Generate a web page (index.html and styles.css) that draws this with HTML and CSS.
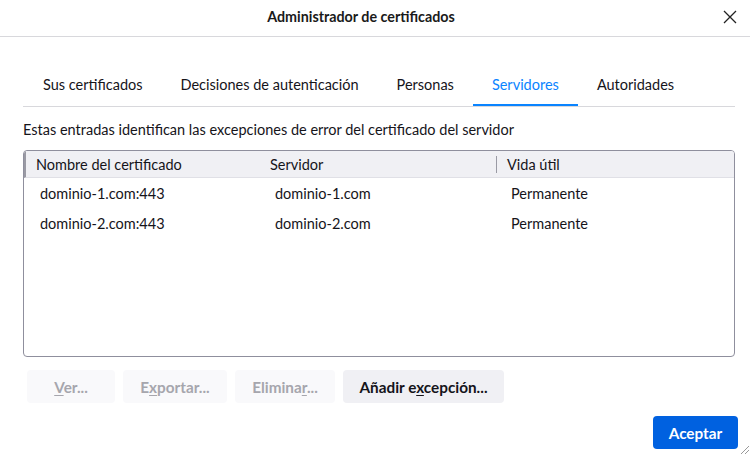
FILE: index.html
```html
<!DOCTYPE html>
<html lang="es">
<head>
<meta charset="utf-8">
<link rel="stylesheet" href="styles.css">
</head>
<body>
<div class="dialog">
  <header class="titlebar">
    <div class="title">Administrador de certificados</div>
    <button class="close" aria-label="Cerrar">
      <svg width="14" height="14" viewBox="0 0 14 14"><path d="M1 1L13 13M13 1L1 13" stroke="#222" stroke-width="1.3" fill="none"/></svg>
    </button>
  </header>
  <main class="content">
    <nav class="tabs">
      <div class="tab">Sus certificados</div>
      <div class="tab">Decisiones de autenticación</div>
      <div class="tab">Personas</div>
      <div class="tab selected">Servidores</div>
      <div class="tab">Autoridades</div>
    </nav>
    <p class="desc">Estas entradas identifican las excepciones de error del certificado del servidor</p>
    <div class="table">
      <div class="thead">
        <div class="th c1">Nombre del certificado</div>
        <div class="th c2">Servidor</div>
        <div class="th c3 sep">Vida útil</div>
      </div>
      <div class="row">
        <div class="td c1">dominio-1.com:443</div>
        <div class="td c2">dominio-1.com</div>
        <div class="td c3">Permanente</div>
      </div>
      <div class="row">
        <div class="td c1">dominio-2.com:443</div>
        <div class="td c2">dominio-2.com</div>
        <div class="td c3">Permanente</div>
      </div>
    </div>
    <div class="actions">
      <button class="btn disabled b-ver"><u>V</u>er...</button>
      <button class="btn disabled b-exp">E<u>x</u>portar...</button>
      <button class="btn disabled b-eli">Elimina<u>r</u>...</button>
      <button class="btn b-add">Añadir e<u>x</u>cepción...</button>
    </div>
    <div class="footer">
      <button class="btn primary">Aceptar</button>
    </div>
  </main>
  <div class="grip"></div>
</div>
</body>
</html>
```
FILE: styles.css
```css
* { box-sizing: border-box; }
html, body { margin: 0; padding: 0; background: #fff; }
body {
  font-family: "Lato", "Noto Sans", sans-serif;
  font-size: 14.5px;
  color: #15141a;
  width: 750px;
  height: 455px;
  overflow: hidden;
}
.dialog { position: relative; width: 750px; height: 455px; }
.titlebar {
  height: 37px;
  border-bottom: 1px solid #d8d8dc;
  display: flex;
  align-items: center;
  justify-content: center;
  padding-right: 28px;
  padding-bottom: 4px;
  position: relative;
}
.title { font-weight: 700; font-size: 14.3px; color: #1a1a1a; }
.close {
  position: absolute;
  right: 13px;
  top: 10px;
  background: none;
  border: 0;
  padding: 0;
  width: 14px;
  height: 14px;
  display: flex;
}
.content { padding: 0 12px 0 23px; }
.tabs {
  margin-top: 33px;
  display: flex;
  border-bottom: 1px solid #d8d8dc;
  width: 712px;
  height: 37px;
}
.tab {
  padding: 0 19px 5px;
  height: 36px;
  display: flex;
  align-items: center;
  border-bottom: 2px solid transparent;
}
.tab:first-child { padding-left: 20px; }
.tab.selected { color: #0a84ff; border-bottom-color: #0a84ff; }
.desc { margin: 13px 0 0; line-height: 20px; }
.table {
  margin-top: 10px;
  width: 712px;
  height: 207px;
  border: 1px solid #8f8f9d;
  border-radius: 4px;
  overflow: hidden;
}
.thead {
  display: flex;
  height: 27px;
  background: #f0f0f4;
  border-bottom: 1px solid #e0e0e6;
  border-left: 2px solid #9a9aa4;
  align-items: center;
}
.row { display: flex; height: 30px; align-items: center; }
.row:first-of-type { margin-top: 2px; }
.c1 { width: 239px; }
.c2 { width: 231px; }
.c3 { flex: 1; }
.th.c1 { padding-left: 10px; }
.th.c2 { padding-left: 5px; }
.td.c1 { padding-left: 16px; }
.td.c2 { padding-left: 12px; }
.td.c3 { padding-left: 17px; }
.th.sep { border-left: 1px solid #9a9aa4; height: 17px; display: flex; align-items: center; padding-left: 10px; }
.actions { display: flex; gap: 8px; margin-top: 13px; padding-left: 4px; }
.btn {
  font-family: inherit;
  font-size: 15.3px;
  font-weight: 700;
  height: 33px;
  border: 0;
  border-radius: 4px;
  background: #f0f0f4;
  color: #15141a;
  padding: 0;
}
.btn u { text-decoration-thickness: 1px; text-underline-offset: 2px; }
.btn.disabled { background: #f9f9fb; color: #a6a6ad; }
.b-ver { width: 88px; }
.b-exp { width: 104px; }
.b-eli { width: 100px; }
.b-add { width: 161px; }
.footer { display: flex; justify-content: flex-end; margin-top: 13px; }
.btn.primary { width: 85px; height: 33px; background: #0061e0; color: #fff; }
.grip {
  position: absolute;
  right: 1px;
  bottom: 1px;
  width: 8px;
  height: 8px;
  background: linear-gradient(135deg, transparent 45%, #999 45%, #999 52%, transparent 52%, transparent 70%, #999 70%, #999 77%, transparent 77%);
}
```
